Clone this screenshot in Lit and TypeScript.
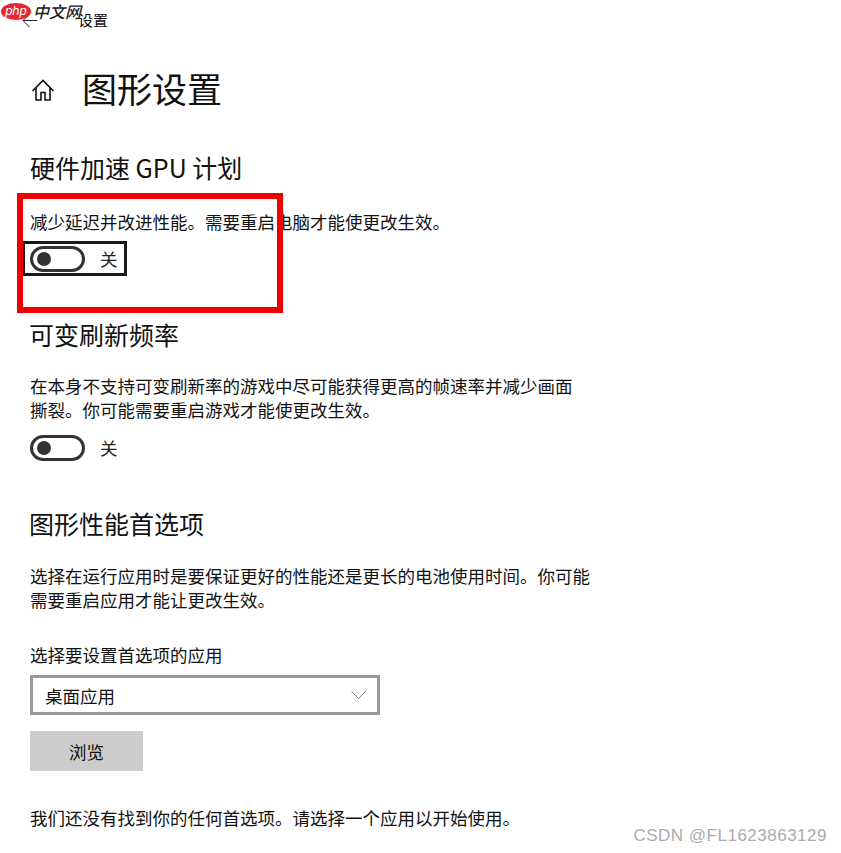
import { LitElement, html, css } from 'lit';
import { customElement } from 'lit/decorators.js';

@customElement('settings-toggle')
export class SettingsToggle extends LitElement {
  static styles = css`
    :host {
      display: block;
    }
    .row {
      display: inline-flex;
      align-items: center;
      gap: 15px;
      height: 26px;
    }
    .track {
      box-sizing: border-box;
      width: 55px;
      height: 26px;
      border: 3px solid #333;
      border-radius: 13px;
      display: flex;
      align-items: center;
      padding-left: 4px;
    }
    .thumb {
      width: 14px;
      height: 14px;
      border-radius: 50%;
      background: #333;
    }
    .label {
      font-size: 17.5px;
      line-height: 26px;
      color: #222;
    }
  `;

  render() {
    return html`
      <div class="row">
        <div class="track"><div class="thumb"></div></div>
        <span class="label">关</span>
      </div>
    `;
  }
}

@customElement('app-root')
export class AppRoot extends LitElement {
  static styles = css`
    :host {
      display: block;
      position: relative;
      width: 841px;
      height: 853px;
      overflow: hidden;
      background: #fff;
      color: #111;
      font-family: 'Noto Sans CJK SC', sans-serif;
    }
    .topbar {
      display: flex;
      align-items: center;
      height: 40px;
      padding-left: 22px;
    }
    .topbar svg {
      width: 15px;
      height: 15px;
      flex: none;
    }
    .topbar span {
      margin-left: 41px;
      font-size: 15px;
      line-height: 20px;
    }
    .title-row {
      display: flex;
      align-items: center;
      gap: 27px;
      height: 60px;
      margin-top: 20px;
      padding-left: 31px;
    }
    .title-row svg {
      width: 24px;
      height: 24px;
      flex: none;
    }
    h1 {
      margin: 0 0 4px;
      font-size: 35px;
      font-weight: 400;
      line-height: 56px;
    }
    .content {
      padding-left: 30px;
      width: 562px;
    }
    h2 {
      margin: 0;
      font-size: 25px;
      font-weight: 400;
      line-height: 36px;
    }
    p {
      margin: 0;
      font-size: 17.5px;
      font-weight: 400;
      line-height: 24px;
    }
    .gpu {
      margin-top: 29px;
    }
    .gpu p {
      margin-top: 25px;
      width: 600px;
    }
    .gpu settings-toggle {
      margin-top: 12px;
    }
    .vrr {
      margin-top: 44px;
    }
    .vrr h2 {
      margin-left: -1px;
    }
    .vrr p {
      margin-top: 22px;
      width: 550px;
    }
    .vrr settings-toggle {
      margin-top: 13px;
    }
    .prefs {
      margin-top: 44px;
    }
    .prefs h2 {
      margin-left: -1px;
    }
    .prefs .intro {
      margin-top: 23px;
    }
    .prefs .pick {
      margin-top: 31px;
    }
    .select {
      box-sizing: border-box;
      display: flex;
      align-items: center;
      justify-content: space-between;
      width: 350px;
      height: 40px;
      margin-top: 8px;
      padding: 0 11px 0 12px;
      border: 3px solid #999;
      font-size: 17.5px;
    }
    .select svg {
      width: 15px;
      height: 10px;
    }
    .browse {
      display: flex;
      align-items: center;
      justify-content: center;
      width: 113px;
      height: 40px;
      margin-top: 16px;
      background: #ccc;
      font-size: 17.5px;
    }
    .empty {
      margin-top: 35px;
      width: 600px;
    }
    .focus-ring {
      position: absolute;
      left: 22px;
      top: 241px;
      box-sizing: border-box;
      width: 105px;
      height: 35px;
      border: 3px solid #1a1a1a;
    }
    .red-box {
      position: absolute;
      left: 17px;
      top: 193px;
      box-sizing: border-box;
      width: 266px;
      height: 120px;
      border: 6px solid #f00000;
    }
    .logo {
      position: absolute;
      left: 1px;
      top: 0;
      height: 22px;
      display: flex;
      align-items: center;
    }
    .logo .pill {
      width: 30px;
      height: 17px;
      border-radius: 50%;
      background: #e8262d;
      color: #fff;
      font-family: 'Liberation Sans', sans-serif;
      font-size: 13px;
      font-style: italic;
      line-height: 15px;
      text-align: center;
    }
    .logo .name {
      margin-left: 2px;
      font-size: 16px;
      line-height: 22px;
      font-style: italic;
      font-weight: 500;
      color: #222;
    }
    .watermark {
      position: absolute;
      right: 14px;
      top: 826px;
      font-family: 'Liberation Sans', sans-serif;
      font-size: 17px;
      line-height: 20px;
      color: #ababab;
      letter-spacing: 0.5px;
    }
  `;

  render() {
    return html`
      <div class="topbar">
        <svg viewBox="0 0 15 15" fill="none" stroke="#222" stroke-width="1">
          <path d="M15 7.5H1M7.5 1L1 7.5L7.5 14" />
        </svg>
        <span>设置</span>
      </div>
      <div class="title-row">
        <svg viewBox="0 0 24 24" fill="none" stroke="#111" stroke-width="1.6">
          <path d="M1.5 13L12 2.5L22.5 13M5 10V22H10V14.5H14V22H19V10" />
        </svg>
        <h1>图形设置</h1>
      </div>
      <div class="content">
        <section class="gpu">
          <h2>硬件加速 GPU 计划</h2>
          <p>减少延迟并改进性能。需要重启电脑才能使更改生效。</p>
          <settings-toggle></settings-toggle>
        </section>
        <section class="vrr">
          <h2>可变刷新频率</h2>
          <p>在本身不支持可变刷新率的游戏中尽可能获得更高的帧速率并减少画面撕裂。你可能需要重启游戏才能使更改生效。</p>
          <settings-toggle></settings-toggle>
        </section>
        <section class="prefs">
          <h2>图形性能首选项</h2>
          <p class="intro">选择在运行应用时是要保证更好的性能还是更长的电池使用时间。你可能需要重启应用才能让更改生效。</p>
          <p class="pick">选择要设置首选项的应用</p>
          <div class="select">
            <span>桌面应用</span>
            <svg viewBox="0 0 15 10" fill="none" stroke="#666" stroke-width="0.8">
              <path d="M0.5 1.5L7.5 8.5L14.5 1.5" />
            </svg>
          </div>
          <div class="browse">浏览</div>
          <p class="empty">我们还没有找到你的任何首选项。请选择一个应用以开始使用。</p>
        </section>
      </div>
      <div class="focus-ring"></div>
      <div class="red-box"></div>
      <div class="logo">
        <div class="pill">php</div>
        <div class="name">中文网</div>
      </div>
      <div class="watermark">CSDN @FL1623863129</div>
    `;
  }
}
